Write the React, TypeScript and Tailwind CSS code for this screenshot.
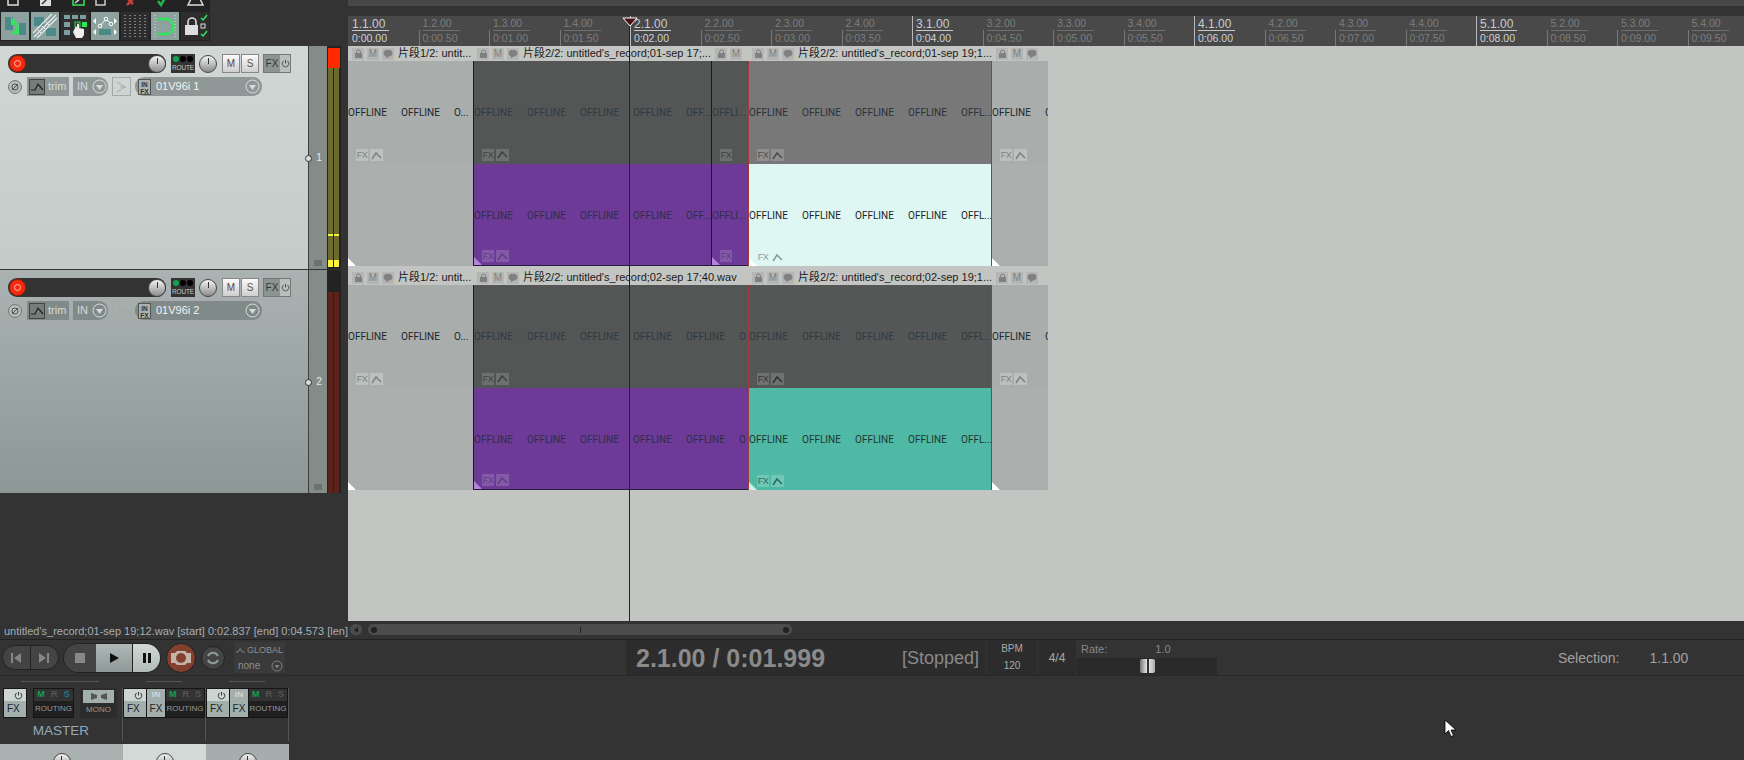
import { ReactNode } from 'react';

const FONT = "font-['Liberation_Sans','Noto_Sans_CJK_SC',sans-serif]";

function ToolCell({ active, children }: { active?: boolean; children?: ReactNode }) {
  return (
    <div className={`w-[28px] h-[28px] ${active ? 'bg-[#8da19f]' : 'bg-[#2d2d2d]'}`}>
      <svg width="28" height="28" viewBox="0 0 28 28">{children}</svg>
    </div>
  );
}

function Toolbar() {
  return (
    <div className="w-[348px] h-[46px] bg-[#333333] flex-none">
      <div className="w-[210px] h-[41px] bg-[#232323] flex flex-col">
        <svg width="210" height="12" viewBox="0 0 210 12" className="flex-none">
          <rect x="8" y="-4" width="10" height="9" fill="none" stroke="#ddd" strokeWidth="1.5" />
          <rect x="40" y="-4" width="11" height="10" fill="#ddd" />
          <path d="M42 4l5-5" stroke="#333" strokeWidth="1.5" />
          <rect x="73" y="-4" width="11" height="9" fill="none" stroke="#2ee85a" strokeWidth="1.5" />
          <path d="M75 3l6-5" stroke="#ddd" strokeWidth="1.5" />
          <rect x="96" y="-4" width="9" height="9" fill="none" stroke="#ccc" strokeWidth="1.5" />
          <path d="M127 5l7-7M127 -2l6 6" stroke="#c8403a" strokeWidth="2.5" />
          <path d="M158 1l3 4 4-7" stroke="#25b34d" strokeWidth="2.5" fill="none" />
          <path d="M188 5l4-8h7l4 8z" fill="none" stroke="#ddd" strokeWidth="1.5" />
        </svg>
        <div className="flex gap-[2px] pl-[1px]">
          <ToolCell active>
            <rect x="4" y="5" width="8" height="13" fill="#4b8a88" />
            <rect x="18" y="11" width="7" height="12" fill="#4b8a88" />
            <path d="M10 5l8 8h-8zM18 13v9h-8z" fill="#2ee85a" />
          </ToolCell>
          <ToolCell active>
            <rect x="3" y="5" width="10" height="9" fill="#4b8a88" />
            <rect x="15" y="16" width="10" height="8" fill="#4b8a88" />
            <path d="M3 25L25 3M6 26L26 6M2 21L21 2" stroke="#e8eeee" strokeWidth="1.2" />
            <path d="M7 18l4 4M11 14l4 4M15 10l4 4" stroke="#e8eeee" strokeWidth="1" />
          </ToolCell>
          <ToolCell>
            <rect x="3" y="3" width="6" height="4" fill="#7b9ea0" />
            <rect x="11" y="3" width="6" height="4" fill="#7b9ea0" />
            <rect x="19" y="3" width="6" height="4" fill="#7b9ea0" />
            <rect x="3" y="10" width="6" height="5" fill="#7b9ea0" />
            <rect x="3" y="18" width="6" height="5" fill="#7b9ea0" />
            <rect x="14" y="10" width="5" height="5" fill="none" stroke="#2ee85a" />
            <rect x="21" y="10" width="5" height="5" fill="#2ee85a" />
            <path d="M14 16c1-2 2-1 2 0v-3c0-2 2-2 2 0v3l5 1v6l-2 3h-6l-3-6z" fill="#eee" />
          </ToolCell>
          <ToolCell active>
            <path d="M9 14l6-7 5 5" stroke="#fff" fill="none" />
            <circle cx="9" cy="14" r="1.8" fill="#8da19f" stroke="#fff" />
            <circle cx="15" cy="7" r="1.8" fill="#8da19f" stroke="#fff" />
            <circle cx="20" cy="12" r="1.8" fill="#8da19f" stroke="#fff" />
            <path d="M2 9l3-3v6zM26 9l-3-3v6zM2 20l3-3v6zM26 20l-3-3v6z" fill="#fff" />
            <rect x="8" y="17" width="12" height="6" fill="#4b8a88" />
          </ToolCell>
          <ToolCell>
            <path d="M4 3v23M9 3v23M14 3v23M19 3v23M24 3v23" stroke="#cfcfcf" strokeDasharray="1 2" />
          </ToolCell>
          <ToolCell active>
            <path d="M6 7h9a7.5 7.5 0 010 15H6" fill="none" stroke="#2ee85a" strokeWidth="2.5" />
            <path d="M4 3v23M24 3v23" stroke="#d8e0e0" strokeDasharray="1 2" />
          </ToolCell>
          <ToolCell>
            <path d="M7 13v-3a4 4 0 018 0v3" fill="none" stroke="#ddd" strokeWidth="1.6" />
            <rect x="4" y="13" width="13" height="10" fill="#ddd" />
            <path d="M20 6l2 2 4-5M20 22l2 2 4-5" stroke="#2ee85a" fill="none" strokeWidth="1.5" />
            <rect x="20" y="12" width="4" height="4" fill="none" stroke="#ddd" />
          </ToolCell>
        </div>
      </div>
    </div>
  );
}

function RulerCell({ index }: { index: number }) {
  const major = index % 4 === 0;
  const label = `${1 + Math.floor(index / 4)}.${(index % 4) + 1}.00`;
  const whole = Math.floor(index / 2);
  const time = `0:${whole < 10 ? '0' : ''}${whole}.${index % 2 ? '50' : '00'}`;
  return (
    <div className={`w-[70.5px] flex-none h-[30px] flex flex-col border-l ${major && index > 0 ? 'border-[#b8b8b8]' : 'border-transparent'}`}>
      <div className={`h-[14px] pl-[3px] leading-[14px] ${major ? 'text-[12px] text-[#c4cdd4] pt-[1px]' : 'text-[10.5px] text-[#7d7d7d]'}`}>{label}</div>
      <div className={`h-[16px] -ml-px pl-[3px] border-l ${major && index > 0 ? 'border-transparent' : index > 0 ? 'border-[#787878]' : 'border-transparent'}`}>
        <div className={`w-[37px] border-t leading-[14px] text-[10.5px] ${major ? 'border-[#c8c8c8] text-[#ccd4da]' : 'border-[#6e6e6e] text-[#7d7d7d]'}`}>{time}</div>
      </div>
    </div>
  );
}

function Ruler() {
  return (
    <div className="flex-1 flex flex-col overflow-hidden">
      <div className="h-[6px] bg-[#484848]" />
      <div className="h-[10px] bg-[#333333]" />
      <div className="h-[30px] bg-[#494949] flex overflow-hidden">
        {Array.from({ length: 20 }, (_, i) => <RulerCell key={i} index={i} />)}
      </div>
    </div>
  );
}

function Knob({ size = 18 }: { size?: number }) {
  return (
    <div style={{ width: size, height: size }} className="rounded-full border border-[#444] bg-linear-to-b from-[#f4f4f4] to-[#8c8c8c] flex justify-center flex-none">
      <div className="w-px h-[6px] bg-[#333] mt-[2px]" />
    </div>
  );
}

function TrackControl({ name, number, gradient, pill, meter }: { name: string; number: string; gradient: string; pill: string; meter: ReactNode }) {
  return (
    <div className="flex h-full">
      <div className={`w-[308px] pt-[8px] pl-[8px] flex-none ${gradient}`}>
        <div className="flex h-[19px] items-center">
          <div className="w-[158px] h-[19px] bg-[#333333] rounded-[9px] flex items-center justify-between">
            <div className="w-[17px] h-[17px] ml-px rounded-full bg-[#f32a0e] border border-[#a01a08] flex items-center justify-center">
              <div className="w-[7px] h-[7px] rounded-full border border-[#ffc0b0]" />
            </div>
            <Knob />
          </div>
          <div className="ml-[5px] w-[24px] h-[19px] bg-[#333] flex flex-col items-center">
            <div className="flex gap-px mt-[2px]">
              <div className="w-[6px] h-[6px] rounded-full bg-[#12a150]" />
              <div className="w-[6px] h-[6px] rounded-full bg-black" />
              <div className="w-[6px] h-[6px] rounded-full bg-black" />
            </div>
            <div className="text-[6.5px] leading-[9px] mt-px text-[#c8c8c8] tracking-tight">ROUTE</div>
          </div>
          <div className="ml-[4px]"><Knob /></div>
          <div className="ml-[5px] flex gap-px">
            <div className="w-[18px] h-[19px] bg-linear-to-b from-[#fafafa] to-[#cfcfcf] border border-[#888] text-[10px] leading-[17px] text-center text-[#6b3a30]">M</div>
            <div className="w-[18px] h-[19px] bg-linear-to-b from-[#fafafa] to-[#cfcfcf] border border-[#888] text-[10px] leading-[17px] text-center text-[#5e5a30]">S</div>
          </div>
          <div className="ml-[4px] w-[28px] h-[19px] border border-[#777] flex">
            <div className="w-[16px] bg-[#8a9492] text-[10px] leading-[17px] text-center text-[#2f3a3a]">FX</div>
            <div className="flex-1 bg-[#b8c0be] flex items-center justify-center">
              <svg width="9" height="9" viewBox="0 0 10 10"><path d="M3 2.2a3.6 3.6 0 104 0M5 1v4" fill="none" stroke="#444" /></svg>
            </div>
          </div>
        </div>
        <div className="flex h-[19px] items-center mt-[4px] text-[11px]">
          <div className="w-[14px] h-[14px] rounded-full border border-[#777] bg-[#b4bcba] flex items-center justify-center">
            <svg width="10" height="10" viewBox="0 0 10 10"><circle cx="5" cy="5" r="3" fill="none" stroke="#555" /><path d="M2 8l6-6" stroke="#555" /></svg>
          </div>
          <div className={`ml-[5px] w-[42px] h-[19px] ${pill} flex items-center pl-[2px] text-[#d6dcdb]`}>
            <svg width="16" height="16" viewBox="0 0 16 16" className="flex-none"><rect x=".5" y=".5" width="15" height="15" fill="#737d7b" stroke="#444" /><path d="M2 11l4 0 3-6 5 6" fill="none" stroke="#222" strokeWidth="1.2" /></svg>
            <span className="ml-[3px]">trim</span>
          </div>
          <div className={`ml-[4px] w-[35px] h-[19px] ${pill} rounded-r-[9px] flex items-center pl-[4px] text-[#d6dcdb]`}>
            <span>IN</span>
            <svg width="15" height="15" viewBox="0 0 15 15" className="ml-[4px]"><circle cx="7.5" cy="7.5" r="6.5" fill="none" stroke="#d6dcdb" /><path d="M4 6h7l-3.5 5z" fill="#d6dcdb" /></svg>
          </div>
          <div className="ml-[4px] w-[19px] h-[19px] border border-[#a3aba9] flex items-center justify-center">
            <svg width="12" height="14" viewBox="0 0 12 14"><path d="M1 2l8 5-8 5M4 7h6" fill="none" stroke="#a3aba9" /></svg>
          </div>
          <div className={`ml-[4px] w-[127px] h-[19px] ${pill} rounded-[9px] flex items-center text-[#f0f4f4] text-[11px]`}>
            <div className="ml-[3px] w-[13px] h-[16px] bg-[#a9b2b0] border border-[#555] text-[6.5px] leading-[7px] text-center font-bold text-[#333] flex-none pt-px">IN<br />FX</div>
            <span className="ml-[5px] flex-1">{name}</span>
            <svg width="15" height="15" viewBox="0 0 15 15" className="mr-[2px]"><circle cx="7.5" cy="7.5" r="6.5" fill="none" stroke="#d6dcdb" /><path d="M4 6h7l-3.5 5z" fill="#d6dcdb" /></svg>
          </div>
        </div>
      </div>
      <div className="w-[19px] bg-[#848c8a] border-l border-[#3d3d3d] flex flex-col items-center justify-center flex-none relative">
        <span className="text-[10px] ml-[2px] text-[#e8e8e8]">{number}</span>
        <div className="absolute left-[-4px] top-[109px] w-[7px] h-[7px] rounded-full border border-[#333] bg-[#ddd]" />
        <div className="absolute left-[5px] bottom-[3px] w-[8px] h-[6px] bg-[#6a7270]" />
      </div>
      <div className="w-[14px] bg-[#232323] flex-none">{meter}</div>
    </div>
  );
}

function MeterOne() {
  return (
    <div className="flex flex-col h-full relative">
      <div className="flex gap-px pl-px h-full">
        {[0, 1].map((c) => (
          <div key={c} className="w-[5px] flex flex-col h-full">
            <div className="h-[2px]" />
            <div className="h-[20px] w-[6px] bg-[#ff2a00]" />
            <div className="h-[166px] bg-[#6c6a2c]" />
            <div className="h-[2px] bg-[#f2f23a]" />
            <div className="h-[24px] bg-[#6c6a2c]" />
            <div className="h-[7px] bg-[#fff43c]" />
          </div>
        ))}
      </div>
    </div>
  );
}

function MeterTwo() {
  return (
    <div className="flex gap-px pl-px h-full pt-[22px]">
      {[0, 1].map((c) => <div key={c} className="w-[5px] h-full bg-[#5a2219]" />)}
    </div>
  );
}

function ItemHeader({ width, label, buttons = 3 }: { width: number; label: string; buttons?: number }) {
  return (
    <div style={{ width }} className="h-[15px] flex items-center overflow-hidden flex-none bg-[#c3c5c3] pl-[4px] text-[11px] text-[#1a1a1a]">
      <div className="w-[12px] h-[12px] mr-[3px] bg-[#b4b6b4] flex items-center justify-center flex-none">
        <svg width="9" height="10" viewBox="0 0 9 10"><path d="M2.5 4V3a2 2 0 014 0v1" fill="none" stroke="#808080" /><rect x="1" y="4" width="7" height="5" fill="#808080" /></svg>
      </div>
      {buttons > 1 && <div className="w-[12px] h-[12px] mr-[3px] bg-[#b4b6b4] text-[10px] leading-[12px] text-center text-[#808080] flex-none">M</div>}
      {buttons > 2 && (
        <div className="w-[12px] h-[12px] mr-[4px] bg-[#b4b6b4] flex items-center justify-center flex-none">
          <svg width="10" height="10" viewBox="0 0 10 10"><ellipse cx="5" cy="4.2" rx="4.4" ry="3.4" fill="#808080" /><path d="M3 7l0 2.5 3-2.5z" fill="#808080" /></svg>
        </div>
      )}
      <span className="whitespace-nowrap">{label}</span>
    </div>
  );
}

function Offline({ labels, dark }: { labels: string[]; dark: string }) {
  return (
    <div className={`flex font-['Roboto',sans-serif] text-[10px] leading-[12px] whitespace-nowrap h-[12px] ${dark}`}>
      {labels.map((l, i) => <span key={i} className="w-[53px] flex-none">{l}</span>)}
    </div>
  );
}

function Badges({ dim, noEnv }: { dim: string; noEnv?: boolean }) {
  return (
    <div className="flex gap-[2px] ml-[8px] mb-[3px] h-[12px]">
      <div className={`w-[12px] h-[12px] text-[9px] leading-[12px] text-center tracking-[-0.5px] ${dim}`}>FX</div>
      {!noEnv && (
        <div className={`w-[13px] h-[12px] flex items-center justify-center ${dim}`}>
          <svg width="11" height="9" viewBox="0 0 11 9"><path d="M1 8l4-6 5 5" fill="none" stroke="currentColor" strokeWidth="1.6" /></svg>
        </div>
      )}
    </div>
  );
}

type ItemSpec = {
  width: number;
  top: string;
  bottom: string;
  labels: string[];
  textTop: string;
  textBottom: string;
  badgeTop: string;
  badgeBottom: string;
  edges: string;
  noEnv?: boolean;
  blankBottom?: boolean;
  corner: string;
};

function Take({ bg, labels, text, badge, noEnv, height }: { bg: string; labels: string[]; text: string; badge: string; noEnv?: boolean; height: string }) {
  return (
    <div className={`${bg} ${height} flex flex-col justify-between pt-[46px] overflow-hidden`}>
      <Offline labels={labels} dark={text} />
      <Badges dim={badge} noEnv={noEnv} />
    </div>
  );
}

function Item({ spec }: { spec: ItemSpec }) {
  return (
    <div style={{ width: spec.width }} className={`h-[205px] flex-none flex flex-col relative overflow-hidden ${spec.edges}`}>
      <Take height="h-[103px]" bg={spec.top} labels={spec.labels} text={spec.textTop} badge={spec.badgeTop} noEnv={spec.noEnv} />
      {spec.blankBottom
        ? <div className={`${spec.bottom} h-[102px]`} />
        : <Take height="h-[102px]" bg={spec.bottom} labels={spec.labels} text={spec.textBottom} badge={spec.badgeBottom} noEnv={spec.noEnv} />}
      <svg width="8" height="8" viewBox="0 0 8 8" className="absolute left-0 bottom-0"><path d="M0 0l8 8H0z" fill={spec.corner} /></svg>
    </div>
  );
}

const gray = { top: 'bg-[#a9adac]', bottom: 'bg-[#abafae]', textTop: 'text-[#20262a]', textBottom: 'text-[#20262a]', badgeTop: 'bg-[#bcc0bf] text-[#7d8180]', badgeBottom: 'bg-[#abafae]', edges: '', corner: '#ffffff', blankBottom: true };
const purple = { top: 'bg-[#545655]', bottom: 'bg-[#6d3a97]', textTop: 'text-[#2f3a44]', textBottom: 'text-[#2d2f4a]', badgeTop: 'bg-[#6e706f] text-[#3f4342]', badgeBottom: 'bg-[#8559a8] text-[#5a4180]', edges: 'border-l border-b border-l-[#1a1a1a] border-b-[#2a1a40]', corner: '#b184dc' };

const track1: ItemSpec[] = [
  { ...gray, width: 125, labels: ['OFFLINE', 'OFFLINE', 'O...'] },
  { ...purple, width: 238, labels: ['OFFLINE', 'OFFLINE', 'OFFLINE', 'OFFLINE', 'OFF...'] },
  { ...purple, width: 37, labels: ['OFFLI...'], noEnv: true },
  {
    width: 244, top: 'bg-[#787878]', bottom: 'bg-[#dff7f2]', labels: ['OFFLINE', 'OFFLINE', 'OFFLINE', 'OFFLINE', 'OFFL...'],
    textTop: 'text-[#2a3238]', textBottom: 'text-[#1c2226]', badgeTop: 'bg-[#8f8f8f] text-[#4c4c4c]', badgeBottom: 'bg-[#dff7f2] text-[#8a9a98]',
    edges: 'border-x border-[#a33a3a]', corner: '#ffffff',
  },
  { ...gray, width: 56, labels: ['OFFLINE', 'O'] },
];

const track2: ItemSpec[] = [
  { ...gray, width: 125, labels: ['OFFLINE', 'OFFLINE', 'O...'] },
  { ...purple, width: 275, labels: ['OFFLINE', 'OFFLINE', 'OFFLINE', 'OFFLINE', 'OFFLINE', 'O'] },
  {
    width: 244, top: 'bg-[#555756]', bottom: 'bg-[#4fb9a5]', labels: ['OFFLINE', 'OFFLINE', 'OFFLINE', 'OFFLINE', 'OFFL...'],
    textTop: 'text-[#2f3a44]', textBottom: 'text-[#1f3534]', badgeTop: 'bg-[#707271] text-[#2f3333]', badgeBottom: 'bg-[#6fc7b7] text-[#2d6a60]',
    edges: 'border-x border-[#a33a3a]', corner: '#cdf3ea',
  },
  { ...gray, width: 56, labels: ['OFFLINE', 'O'] },
];

function Lane({ items, headers, after }: { items: ItemSpec[]; headers: [number, string, number?][]; after: string }) {
  return (
    <div className={`${after} flex-none`}>
      <div className="flex">
        {headers.map(([w, label, n], i) => <ItemHeader key={i} width={w} label={label} buttons={n} />)}
      </div>
      <div className="flex w-fit border-t border-[#3a3a3a] -mt-px">
        {items.map((s, i) => <Item key={i} spec={s} />)}
      </div>
    </div>
  );
}

function Arrange() {
  return (
    <div className="flex-1 bg-[#c3c5c3] flex flex-col overflow-hidden">
      <Lane
        after="h-[224px]"
        items={track1}
        headers={[
          [125, '片段1/2: untit...'],
          [238, "片段2/2: untitled's_record;01-sep 17;..."],
          [37, '', 2],
          [244, "片段2/2: untitled's_record;01-sep 19;1..."],
          [56, ''],
        ]}
      />
      <Lane
        after="h-[223px]"
        items={track2}
        headers={[
          [125, '片段1/2: untit...'],
          [275, "片段2/2: untitled's_record;02-sep 17;40.wav"],
          [244, "片段2/2: untitled's_record;02-sep 19;1..."],
          [56, ''],
        ]}
      />
    </div>
  );
}

function StatusAndScroll() {
  return (
    <div className="h-[19px] flex bg-[#333333] flex-none border-b border-[#222]">
      <div className="w-[348px] flex-none text-[11px] text-[#a4aeb4] leading-[19px] pl-[4px] pt-[1px] whitespace-nowrap overflow-hidden">
        untitled's_record;01-sep 19;12.wav [start] 0:02.837 [end] 0:04.573 [len]
      </div>
      <div className="flex items-start pt-[3px]">
        <div className="ml-[2px] w-[12px] h-[11px] rounded-full bg-[#4c4c4c] flex items-center justify-center">
          <svg width="6" height="6" viewBox="0 0 6 6"><path d="M5 0v6L1 3z" fill="#222" /></svg>
        </div>
        <div className="ml-[6px] w-[424px] h-[11px] rounded-[5px] bg-[#4c4c4c] flex items-center justify-between px-[3px]">
          <div className="w-[6px] h-[6px] rounded-full bg-[#222]" />
          <div className="w-px h-[6px] bg-[#222]" />
          <div className="w-[6px] h-[6px] rounded-full bg-[#222]" />
        </div>
      </div>
    </div>
  );
}

function Transport() {
  return (
    <div className="h-[36px] flex-none flex bg-[#333333] border-b border-[#282828] text-[#8a8a8a]">
      <div className="w-[626px] flex-none flex items-center">
        <div className="ml-[2px] w-[57px] h-[25px] rounded-full bg-[#444] border border-[#222] flex">
          <div className="w-1/2 border-r border-[#222] flex items-center justify-center">
            <svg width="12" height="12" viewBox="0 0 12 12"><path d="M1 1h2v10H1zM11 1v10L4 6z" fill="#868686" /></svg>
          </div>
          <div className="w-1/2 flex items-center justify-center">
            <svg width="12" height="12" viewBox="0 0 12 12"><path d="M11 1H9v10h2zM1 1v10l7-5z" fill="#868686" /></svg>
          </div>
        </div>
        <div className="ml-[4px] w-[98px] h-[30px] rounded-full border border-[#222] flex overflow-hidden">
          <div className="w-[32px] bg-[#444] flex items-center justify-center"><div className="w-[10px] h-[10px] bg-[#888]" /></div>
          <div className="w-[37px] bg-linear-to-b from-[#aeb9b7] to-[#8f9a98] border-r border-[#222] flex items-center justify-center">
            <svg width="12" height="12" viewBox="0 0 12 12"><path d="M2 1v10l9-5z" fill="#111" /></svg>
          </div>
          <div className="flex-1 bg-linear-to-b from-[#d2d9d7] to-[#b2bbb9] flex items-center justify-center">
            <svg width="10" height="12" viewBox="0 0 10 12"><path d="M1 1h3v10H1zM6 1h3v10H6z" fill="#111" /></svg>
          </div>
        </div>
        <div className="ml-[5px] w-[30px] h-[30px] rounded-full bg-[#84402f] border border-[#222] flex items-center justify-center">
          <svg width="22" height="16" viewBox="0 0 22 16"><path d="M1 3h4l2-2h8l2 2h4v10h-4l-2 2H7l-2-2H1z" fill="#c4b3a9" /><circle cx="11" cy="8" r="5" fill="#84402f" /></svg>
        </div>
        <div className="ml-[5px] w-[24px] h-[24px] rounded-full bg-[#444] border border-[#222] flex items-center justify-center">
          <svg width="14" height="14" viewBox="0 0 14 14"><path d="M2 5a5.5 5.5 0 0110 0M12 9a5.5 5.5 0 01-10 0" fill="none" stroke="#8d9a98" strokeWidth="2" /></svg>
        </div>
        <div className="ml-[9px] w-[51px] h-[31px] bg-[#3a3a3a] text-[10px] leading-[14px] text-[#8f8f8f] px-[2px] pt-[1px]">
          <div className="flex items-center">
            <svg width="13" height="8" viewBox="0 0 13 8" className="mr-[2px]"><path d="M0 7h3l3-5 3 5h4" fill="none" stroke="#a5a5a5" /></svg>
            <span className="text-[9px]">GLOBAL</span>
          </div>
          <div className="flex items-center justify-between mt-[2px] pl-[2px]">
            <span className="text-[10px]">none</span>
            <svg width="12" height="12" viewBox="0 0 12 12"><circle cx="6" cy="6" r="5" fill="none" stroke="#808080" /><path d="M3.5 5h5L6 8.5z" fill="#808080" /></svg>
          </div>
        </div>
      </div>
      <div className="w-[360px] flex-none bg-[#2c2c2c] flex items-center pl-[10px] pr-[7px] pt-[2px] justify-between">
        <span className="text-[25px] font-bold">2.1.00 / 0:01.999</span>
        <span className="text-[18px]">[Stopped]</span>
      </div>
      <div className="ml-px w-[50px] flex-none bg-[#2c2c2c] flex flex-col items-center justify-center gap-[5px] text-[10px] leading-[12px] text-[#a8a8a8]">
        <span>BPM</span>
        <span>120</span>
      </div>
      <div className="ml-px w-[38px] flex-none bg-[#2c2c2c] rounded-[3px] flex items-center justify-center text-[12px] text-[#a8a8a8]">4/4</div>
      <div className="ml-px w-[140px] flex-none flex flex-col">
        <div className="h-[18px] flex items-center text-[11px] text-[#888] pl-[4px]">
          <span>Rate:</span>
          <span className="ml-[48px]">1.0</span>
        </div>
        <div className="h-[18px] bg-[#2a2a2a] flex items-center pl-[63px]">
          <div className="w-[15px] h-[14px] bg-linear-to-r from-[#777] via-[#f0f0f0] to-[#aaa] flex justify-center rounded-[2px]">
            <div className="w-[2px] h-full bg-[#333]" />
          </div>
        </div>
      </div>
      <div className="ml-[341px] flex items-center text-[14px] text-[#a0a0a0] pt-[2px]">
        <span>Selection:</span>
        <span className="ml-[30px]">1.1.00</span>
      </div>
    </div>
  );
}

function FxBox({ wide }: { wide: string }) {
  return (
    <div className={`${wide} h-[30px] bg-[#a3afad] border border-[#151515] flex flex-col flex-none`}>
      <div className="h-[12px] bg-[#cdd5d3] flex justify-end items-center pr-[3px]">
        <svg width="9" height="9" viewBox="0 0 10 10"><path d="M3 2.2a3.6 3.6 0 104 0M5 1v4" fill="none" stroke="#222" /></svg>
      </div>
      <div className="text-[10px] leading-[16px] pl-[3px] text-[#1c2424]">FX</div>
    </div>
  );
}

function InBox() {
  return (
    <div className="w-[18px] h-[30px] bg-[#a3afad] border-y border-[#151515] flex flex-col items-center flex-none">
      <div className="text-[8px] leading-[12px] text-[#e4e8e8] tracking-wide">IN</div>
      <div className="text-[10px] leading-[16px] text-[#1c2424]">FX</div>
    </div>
  );
}

function RoutingBox({ wide, master }: { wide: string; master?: boolean }) {
  return (
    <div className={`${wide} h-[30px] bg-[#1f1f1f] border border-[#151515] flex flex-col flex-none`}>
      <div className="h-[12px] bg-[#333] flex items-center justify-around text-[9px] font-bold text-[#555]">
        <span className="text-[#12a150]">M</span>
        <span>R</span>
        <span className={master ? 'text-[#1b7a8a]' : ''}>S</span>
      </div>
      <div className="text-[8px] leading-[16px] text-center text-[#9a9a9a]">ROUTING</div>
    </div>
  );
}

function Rule({ width, ml }: { width: string; ml: string }) {
  return <div className={`${width} ${ml} h-px bg-[#555555]`} />;
}

function Mixer() {
  return (
    <div className="flex-1 flex flex-col overflow-hidden bg-[#333333] relative">
      <div className="h-[5px] flex-none" />
      <div className="flex flex-none">
        <Rule width="w-[78px]" ml="ml-[21px]" />
        <Rule width="w-[36px]" ml="ml-[47px]" />
        <Rule width="w-[36px]" ml="ml-[47px]" />
      </div>
      <div className="h-[6px] flex-none" />
      <div className="flex h-[53px] flex-none">
        <div className="w-[123px] flex-none border-r border-[#555]">
          <div className="flex pl-[3px] h-[30px]">
            <FxBox wide="w-[24px]" />
            <div className="ml-[6px]"><RoutingBox wide="w-[41px]" master /></div>
            <div className="ml-[6px] w-[37px] h-[30px] bg-[#2c2c2c] flex flex-col items-center pt-[2px]">
              <div className="w-[31px] h-[13px] bg-[#a3afad] flex items-center justify-center">
                <svg width="18" height="9" viewBox="0 0 18 9"><path d="M1 1l6 2v3l-6 2zM17 1l-6 2v3l6 2z" fill="#555" /></svg>
              </div>
              <div className="text-[8px] leading-[13px] text-[#9a9a9a]">MONO</div>
            </div>
          </div>
          <div className="text-[13.5px] leading-[22px] pt-[2px] text-center text-[#93aabb]">MASTER</div>
        </div>
        {[0, 1].map((i) => (
          <div key={i} className="w-[83px] flex-none border-r border-[#555]">
            <div className="flex h-[30px]">
              <FxBox wide="w-[24px]" />
              <InBox />
              <RoutingBox wide="w-[40px]" />
            </div>
          </div>
        ))}
      </div>
      <div className="h-[3px] flex-none" />
      <div className="flex flex-1">
        <div className="w-[123px] bg-[#a9b2b0] flex justify-center pt-[9px]"><Knob /></div>
        <div className="w-[83px] bg-[#d2d9d7] flex justify-center pt-[9px]"><Knob /></div>
        <div className="w-[83px] bg-[#a5aeac] flex justify-center pt-[9px]"><Knob /></div>
      </div>
      <svg width="14" height="19" viewBox="0 0 14 19" className="absolute left-[1444px] top-[43px]">
        <path d="M1 1v14l3.5-3.5 2.5 6 2.5-1-2.5-5.5H12z" fill="#fff" stroke="#000" strokeWidth="0.8" />
      </svg>
    </div>
  );
}

export default function App() {
  return (
    <div className={`w-[1744px] h-[760px] relative overflow-hidden flex flex-col bg-[#333333] ${FONT}`}>
      <div className="flex h-[46px] flex-none">
        <Toolbar />
        <Ruler />
      </div>
      <div className="flex h-[575px] flex-none">
        <div className="w-[348px] flex-none flex flex-col bg-[#333333]">
          <div className="h-[224px] flex-none border-b border-[#333]">
            <TrackControl name="01V96i 1" number="1" pill="bg-[#8f9896]" gradient="bg-linear-to-b from-[#d0d7d5] to-[#c4cbc9]" meter={<MeterOne />} />
          </div>
          <div className="h-[223px] flex-none">
            <TrackControl name="01V96i 2" number="2" pill="bg-[#808a88]" gradient="bg-linear-to-b from-[#aab3b1] to-[#8d9795]" meter={<MeterTwo />} />
          </div>
        </div>
        <Arrange />
      </div>
      <StatusAndScroll />
      <Transport />
      <Mixer />
      {/* playhead */}
      <div className="absolute left-[629px] top-[24px] w-px h-[597px] bg-[#4a1016]" />
      <svg width="16" height="10" viewBox="0 0 16 10" className="absolute left-[622px] top-[17px]">
        <path d="M1 1h14L8 9z" fill="#4a1016" stroke="#fff" />
      </svg>
    </div>
  );
}
